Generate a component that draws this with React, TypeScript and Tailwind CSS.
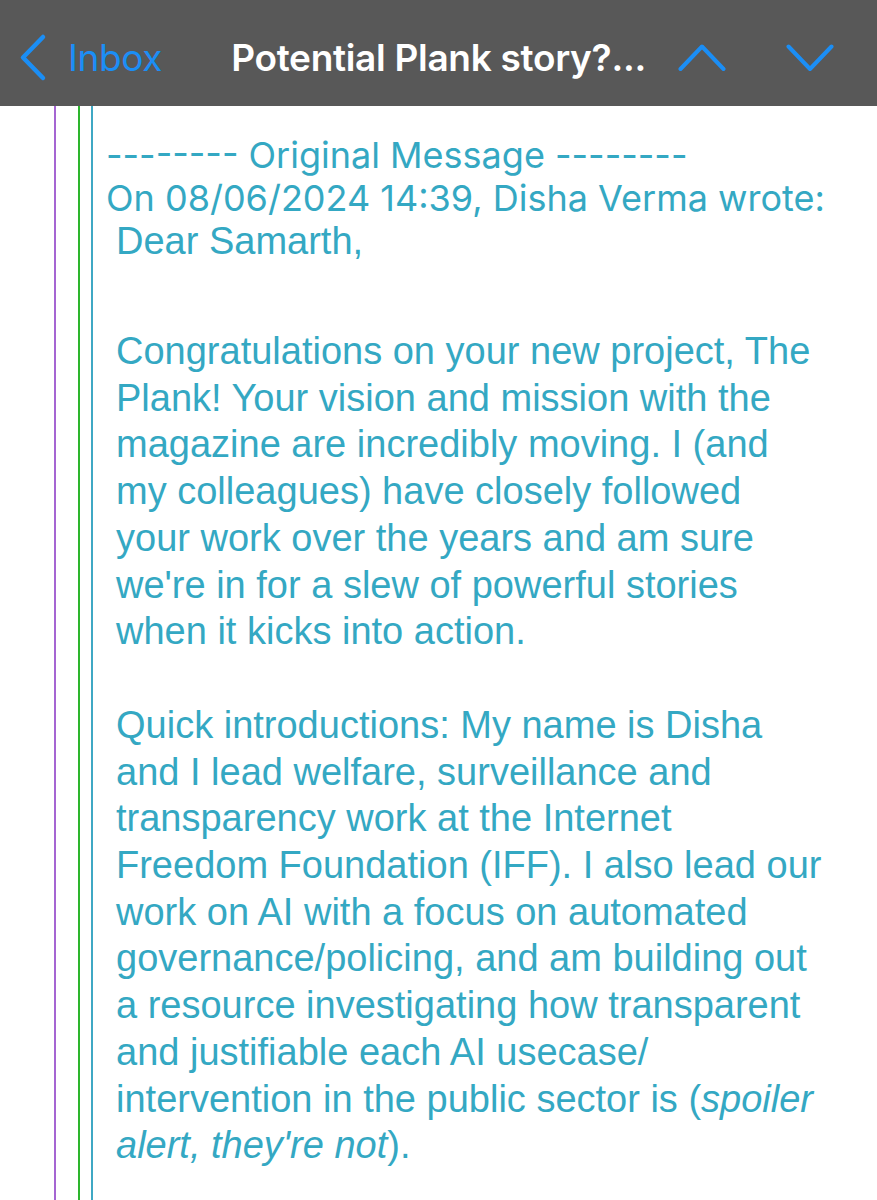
import * as React from "react"

const sf = { fontFamily: "Inter, Roboto, 'Noto Sans', sans-serif" }

function Chevron({ d, w, h, sw = 4 }: { d: string; w: number; h: number; sw?: number }) {
    return (
        <svg width={w} height={h} viewBox={`0 0 ${w} ${h}`} fill="none" stroke="#1b8ef5" strokeWidth={sw} strokeLinecap="round" strokeLinejoin="round">
            <path d={d} />
        </svg>
    )
}

const introLines = [
    "Congratulations on your new project, The",
    "Plank! Your vision and mission with the",
    "magazine are incredibly moving. I (and",
    "my colleagues) have closely followed",
    "your work over the years and am sure",
    "we're in for a slew of powerful stories",
    "when it kicks into action.",
]

const aboutLines = [
    "Quick introductions: My name is Disha",
    "and I lead welfare, surveillance and",
    "transparency work at the Internet",
    "Freedom Foundation (IFF). I also lead our",
    "work on AI with a focus on automated",
    "governance/policing, and am building out",
    "a resource investigating how transparent",
    "and justifiable each AI usecase/",
]

export default function App() {
    return (
        <div className="w-[877px] h-[1200px] overflow-hidden bg-white">
            {/* NAV BAR */}
            <header className="h-[106px] pt-[9px] bg-[#585858] grid grid-cols-[1fr_auto_1fr] items-center" style={sf}>
                <div className="flex items-center pl-[17px]">
                    <Chevron d="M26 4 L6 24.5 L26 45" w={32} h={49} sw={4.5} />
                    <span className="ml-[19px] text-[37px] text-[#1b8ef5] tracking-[-0.4px]">Inbox</span>
                </div>
                <div className="text-[37px] font-semibold text-white tracking-[-0.3px]">Potential Plank story?...</div>
                <div className="flex items-center justify-end gap-[60px] pr-[43px]">
                    <Chevron d="M2.5 25 L24 2.5 L45.5 25" w={48} h={28} />
                    <Chevron d="M2.5 2.5 L24 25 L45.5 2.5" w={48} h={28} />
                </div>
            </header>

            {/* QUOTED THREAD */}
            <div className="ml-[54px] h-[1094px] border-l-2 border-[#a565d2] pl-[22px]">
                <div className="h-full border-l-2 border-[#2db52d] pl-[11px]">
                    <div className="h-full border-l-2 border-[#3fa8c4] pl-[13px] pt-[28px] text-[#34a8c3]">
                        <div className="text-[36px] leading-[43px] whitespace-nowrap" style={sf}>
                            <div>-------- Original Message --------</div>
                            <div>On 08/06/2024 14:39, Disha Verma wrote:</div>
                        </div>
                        <div className="pl-[10px] text-[38px] leading-[46.7px] whitespace-nowrap" style={{ fontFamily: "'Liberation Sans', Arial, sans-serif" }}>
                            <div className="leading-[43px]">Dear Samarth,</div>
                            <div className="mt-[65px]">
                                {introLines.map(l => <div key={l}>{l}</div>)}
                            </div>
                            <div className="mt-[47px]">
                                {aboutLines.map(l => <div key={l}>{l}</div>)}
                                <div>intervention in the public sector is (<em>spoiler</em></div>
                                <div><em>alert, they're not</em>).</div>
                            </div>
                        </div>
                    </div>
                </div>
            </div>
        </div>
    )
}
